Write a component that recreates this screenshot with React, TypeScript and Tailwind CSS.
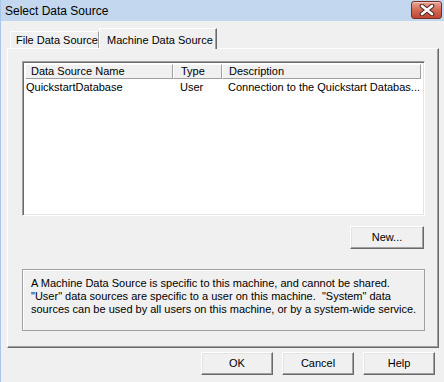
import React from "react";

const font = { fontFamily: '"Liberation Sans", Arial, sans-serif' };

function Btn({ label, w }: { label: string; w: string }) {
  return (
    <div
      className={`${w} h-[23px] flex items-center justify-center text-[11px] text-black bg-[#f0f0f0] border-t border-l border-[#ffffff] border-r border-b border-r-[#696969] border-b-[#696969] shadow-[inset_-1px_-1px_#a0a0a0,inset_1px_1px_#e3e3e3]`}
    >
      {label}
    </div>
  );
}

export default function App() {
  return (
    <div
      style={font}
      className="w-[444px] h-[382px] bg-[#f0f0f0] flex flex-col border-l border-[#a9c6ea] overflow-hidden"
    >
      {/* Title bar */}
      <div className="h-[21px] shrink-0 flex items-center justify-between bg-[#c3d7ef] pl-[4px] pr-[2px]">
        <span className="text-[12px] text-black">Select Data Source</span>
        <div className="w-[31px] h-[18px] mb-[2px] rounded-[3px] border border-[#7a2e24] bg-gradient-to-b from-[#e8a596] via-[#d26a57] to-[#c04632] shadow-[inset_0_1px_#f4c7bd] flex items-center justify-center">
          <svg width="16" height="12" viewBox="0 0 16 12">
            <path d="M3 2 L13 10 M13 2 L3 10" stroke="#4e2621" strokeWidth="4.6" strokeLinecap="round" />
            <path d="M3 2 L13 10 M13 2 L3 10" stroke="#ffffff" strokeWidth="2.6" strokeLinecap="round" />
          </svg>
        </div>
      </div>

      {/* Body */}
      <div className="flex-1 flex flex-col pl-[6px] pr-[5px] pt-[7px]">
        {/* Tabs */}
        <div className="flex items-end h-[20px] pl-[3px] relative z-10">
          <div className="h-[17px] w-[89px] flex items-center pl-[5px] text-[11px] text-black border-t border-l border-white border-r border-r-[#a0a0a0] bg-[#f0f0f0] whitespace-nowrap">
            File Data Source
          </div>
          <div className="h-[21px] w-[118px] -mb-px flex items-start pt-[3px] pl-[7px] text-[11px] text-black border-t border-l border-white border-r border-r-[#696969] bg-[#f0f0f0] shadow-[inset_-1px_0_#a0a0a0] whitespace-nowrap">
            Machine Data Source
          </div>
        </div>

        {/* Panel */}
        <div className="h-[300px] flex flex-col pl-[14px] pr-[13px] pt-[12px] border-t border-l border-white border-r border-b border-r-[#696969] border-b-[#696969] shadow-[inset_-1px_-1px_#a0a0a0]">
          {/* List */}
          <div className="h-[155px] bg-white border-t border-l border-[#a0a0a0] border-r border-b border-r-white border-b-white shadow-[inset_1px_1px_#696969,inset_-1px_-1px_#e3e3e3] p-[2px] flex flex-col">
            <div className="flex h-[15px] text-[11px] text-black">
              <div className="w-[148px] pl-[5px] flex items-center bg-[#f0f0f0] border-t border-l border-white border-r border-b border-r-[#a0a0a0] border-b-[#a0a0a0]">
                Data Source Name
              </div>
              <div className="w-[49px] pl-[7px] flex items-center bg-[#f0f0f0] border-t border-l border-white border-r border-b border-r-[#a0a0a0] border-b-[#a0a0a0]">
                Type
              </div>
              <div className="w-[199px] pl-[6px] flex items-center bg-[#f0f0f0] border-t border-l border-white border-r border-b border-r-[#a0a0a0] border-b-[#a0a0a0]">
                Description
              </div>
            </div>
            <div className="flex h-[16px] text-[11px] text-black items-center">
              <div className="w-[148px] pl-[1px]">QuickstartDatabase</div>
              <div className="w-[49px] pl-[7px]">User</div>
              <div className="w-[199px] pl-[6px] whitespace-nowrap">Connection to the Quickstart Databas...</div>
            </div>
          </div>

          {/* New button */}
          <div className="flex justify-end mt-[10px] pr-[1px]">
            <Btn label="New..." w="w-[74px]" />
          </div>

          {/* Info box */}
          <div className="mt-[20px] h-[62px] border border-[#a0a0a0] shadow-[inset_1px_1px_#ffffff] pl-[8px] pt-[7px] text-[11px] leading-[13px] text-black">
            <div>A Machine Data Source is specific to this machine, and cannot be shared.</div>
            <div>"User" data sources are specific to a user on this machine.&nbsp; "System" data</div>
            <div>sources can be used by all users on this machine, or by a system-wide service.</div>
          </div>
        </div>

        {/* Bottom buttons */}
        <div className="flex justify-end gap-[9px] mt-[4px] pr-[4px]">
          <Btn label="OK" w="w-[72px]" />
          <Btn label="Cancel" w="w-[72px]" />
          <Btn label="Help" w="w-[72px]" />
        </div>
      </div>
    </div>
  );
}
